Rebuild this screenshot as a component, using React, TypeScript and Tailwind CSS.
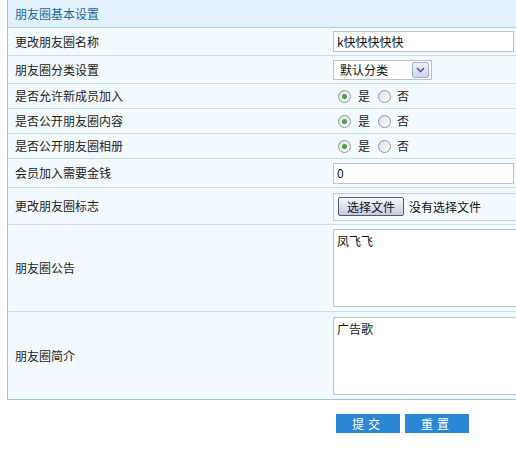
import React from 'react';

const font = { fontFamily: '"Noto Sans CJK SC", "Noto Sans", sans-serif' };

function Row({ label, h, children }: { label: string; h: string; children?: React.ReactNode }) {
    return (
        <div className={`flex items-center border-b border-[#c6dfe9] bg-[#f3faff] ${h}`}>
            <div className="w-[325px] shrink-0 pl-[7px] text-[12px] text-[#222]">{label}</div>
            <div className="flex flex-1 items-center">{children}</div>
        </div>
    );
}

function Radio({ checked }: { checked?: boolean }) {
    return (
        <span className="flex h-[13px] w-[13px] items-center justify-center rounded-full border border-[#8a97a3] bg-gradient-to-br from-[#dcdfe2] to-white">
            {checked && <span className="h-[5px] w-[5px] rounded-full bg-[#3ea83a]" />}
        </span>
    );
}

function YesNo() {
    return (
        <div className="flex items-center pl-[5px] text-[12px] text-[#222]">
            <Radio checked />
            <span className="ml-[7px]">是</span>
            <span className="ml-[8px]"><Radio /></span>
            <span className="ml-[6px]">否</span>
        </div>
    );
}

export default function App() {
    return (
        <div className="h-[449px] w-[516px] overflow-hidden bg-white" style={font}>
            <div className="ml-[7px] w-[560px] border-l border-b border-[#9ec3d4]">
                <div className="flex h-[28px] items-center border-b border-[#a9cfe0] bg-[#e2f1fb] pl-[7px] text-[12px] text-[#1b6a98]">
                    朋友圈基本设置
                </div>
                <Row label="更改朋友圈名称" h="h-[28px]">
                    <div className="flex h-[21px] w-[181px] items-center border border-[#bcc3c8] bg-white px-[3px] text-[12px] text-[#111]">k快快快快快</div>
                </Row>
                <Row label="朋友圈分类设置" h="h-[28px]">
                    <div className="flex h-[20px] w-[99px] items-center justify-between border border-[#b9c2ca] bg-white pl-[6px] pr-[2px] text-[12px] text-[#111]">
                        <span>默认分类</span>
                        <span className="flex h-[16px] w-[17px] items-center justify-center rounded-[2px] border border-[#9fb0c8] bg-gradient-to-b from-[#eef2fb] to-[#c9d6ec]">
                            <svg width="9" height="6" viewBox="0 0 9 6"><path d="M1 1l3.5 3.5L8 1" fill="none" stroke="#4d6185" strokeWidth="1.6" /></svg>
                        </span>
                    </div>
                </Row>
                <Row label="是否允许新成员加入" h="h-[25px]"><YesNo /></Row>
                <Row label="是否公开朋友圈内容" h="h-[25px]"><YesNo /></Row>
                <Row label="是否公开朋友圈相册" h="h-[25px]"><YesNo /></Row>
                <Row label="会员加入需要金钱" h="h-[29px]">
                    <div className="flex h-[21px] w-[181px] items-center border border-[#bcc3c8] bg-white px-[3px] text-[12px] text-[#111]">0</div>
                </Row>
                <Row label="更改朋友圈标志" h="h-[37px]">
                    <div className="mt-[1px] flex h-[28px] w-[200px] items-center border border-[#c8cdd1] pl-[4px] text-[12px] text-[#111]">
                        <span className="flex h-[19px] w-[66px] items-center justify-center rounded-[2px] border border-[#4e5c6e] bg-gradient-to-b from-[#f5f7fb] to-[#c3cde0] text-[12px]">选择文件</span>
                        <span className="ml-[5px]">没有选择文件</span>
                    </div>
                </Row>
                <Row label="朋友圈公告" h="h-[87px]">
                    <div className="h-[78px] w-[200px] border border-[#bcc3c8] bg-white px-[3px] pt-[2px] text-[12px] text-[#111]">凤飞飞</div>
                </Row>
                <div className="flex h-[87px] items-center bg-[#f3faff]">
                    <div className="w-[325px] shrink-0 pl-[7px] text-[12px] text-[#222]">朋友圈简介</div>
                    <div className="h-[78px] w-[200px] border border-[#bcc3c8] bg-white px-[3px] pt-[2px] text-[12px] text-[#111]">广告歌</div>
                </div>
            </div>
            <div className="mt-[14px] flex gap-[5px] pl-[336px]">
                <button className="h-[19px] w-[64px] bg-[#2b86d3] text-[12px] tracking-[4px] text-white">提交</button>
                <button className="h-[19px] w-[64px] bg-[#2b86d3] text-[12px] tracking-[4px] text-white">重置</button>
            </div>
        </div>
    );
}
